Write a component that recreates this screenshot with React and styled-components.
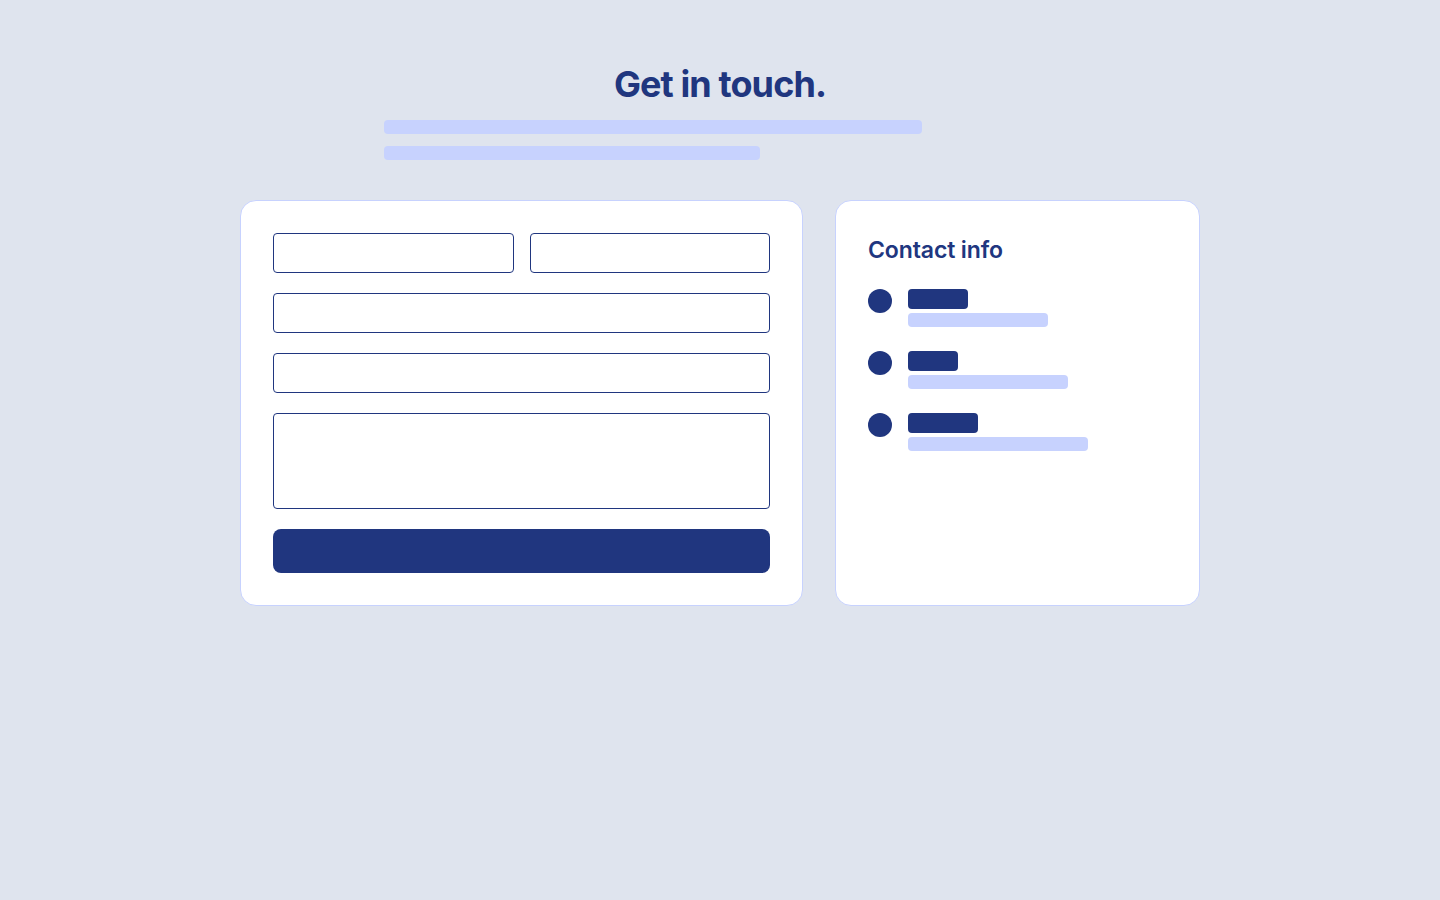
import React from "react";
import styled, { createGlobalStyle } from "styled-components";

const navy = "#20367f";
const lavender = "#c7d2fe";

const Global = createGlobalStyle`
  html, body { margin: 0; padding: 0; }
  body {
    background: #dfe4ee;
    font-family: Inter, "Noto Sans", sans-serif;
    min-height: 100vh;
  }
`;

const Page = styled.main`
  display: flex;
  flex-direction: column;
  align-items: center;
  padding: 64px 0;
`;

const Header = styled.header`
  width: 672px;
  display: flex;
  flex-direction: column;
  align-items: center;
`;

const Title = styled.h1`
  margin: 0;
  font-size: 36px;
  line-height: 40px;
  font-weight: 700;
  letter-spacing: -0.025em;
  color: ${navy};
`;

const Lines = styled.div`
  align-self: stretch;
  display: flex;
  flex-direction: column;
  gap: 12px;
  margin-top: 16px;
`;

const Bar = styled.div`
  height: ${(p) => p.$h || 14}px;
  width: ${(p) => p.$w};
  border-radius: 4px;
  background: ${(p) => (p.$dark ? navy : lavender)};
`;

const Grid = styled.div`
  margin-top: 40px;
  display: grid;
  grid-template-columns: 563px 365px;
  gap: 32px;
`;

const Card = styled.section`
  background: #fff;
  border: 1px solid ${lavender};
  border-radius: 16px;
  padding: 32px;
  box-sizing: border-box;
`;

const Form = styled.form`
  display: flex;
  flex-direction: column;
  gap: 20px;
`;

const Row = styled.div`
  display: grid;
  grid-template-columns: 1fr 1fr;
  gap: 16px;
`;

const Input = styled.input`
  display: block;
  width: 100%;
  box-sizing: border-box;
  height: 40px;
  border: 1px solid ${navy};
  border-radius: 4px;
  background: #fff;
  outline: none;
`;

const TextArea = styled.textarea`
  display: block;
  width: 100%;
  box-sizing: border-box;
  height: 96px;
  border: 1px solid ${navy};
  border-radius: 4px;
  resize: none;
  outline: none;
`;

const Submit = styled.button`
  display: block;
  width: 100%;
  height: 44px;
  border: none;
  border-radius: 8px;
  background: ${navy};
  cursor: pointer;
`;

const InfoTitle = styled.h2`
  margin: 0;
  font-size: 23px;
  line-height: 34px;
  font-weight: 600;
  letter-spacing: -0.005em;
  color: ${navy};
`;

const List = styled.ul`
  list-style: none;
  margin: 22px 0 0;
  padding: 0;
  display: flex;
  flex-direction: column;
  gap: 24px;
`;

const Item = styled.li`
  display: flex;
  gap: 16px;
  align-items: flex-start;
`;

const Dot = styled.span`
  width: 24px;
  height: 24px;
  border-radius: 50%;
  background: ${navy};
  flex: none;
`;

const ItemText = styled.div`
  display: flex;
  flex-direction: column;
  gap: 4px;
`;

const items = [
  { label: 60, value: 140 },
  { label: 50, value: 160 },
  { label: 70, value: 180 },
];

export default function App() {
  return (
    <>
      <Global />
      <Page>
        <Header>
          <Title>Get in touch.</Title>
          <Lines>
            <Bar $w="80%" />
            <Bar $w="56%" />
          </Lines>
        </Header>
        <Grid>
          <Card>
            <Form onSubmit={(e) => e.preventDefault()}>
              <Row>
                <Input aria-label="First name" />
                <Input aria-label="Last name" />
              </Row>
              <Input aria-label="Email" />
              <Input aria-label="Subject" />
              <TextArea aria-label="Message" />
              <Submit type="submit" aria-label="Send" />
            </Form>
          </Card>
          <Card>
            <InfoTitle>Contact info</InfoTitle>
            <List>
              {items.map((it, i) => (
                <Item key={i}>
                  <Dot />
                  <ItemText>
                    <Bar $dark $h={20} $w={`${it.label}px`} />
                    <Bar $w={`${it.value}px`} />
                  </ItemText>
                </Item>
              ))}
            </List>
          </Card>
        </Grid>
      </Page>
    </>
  );
}
